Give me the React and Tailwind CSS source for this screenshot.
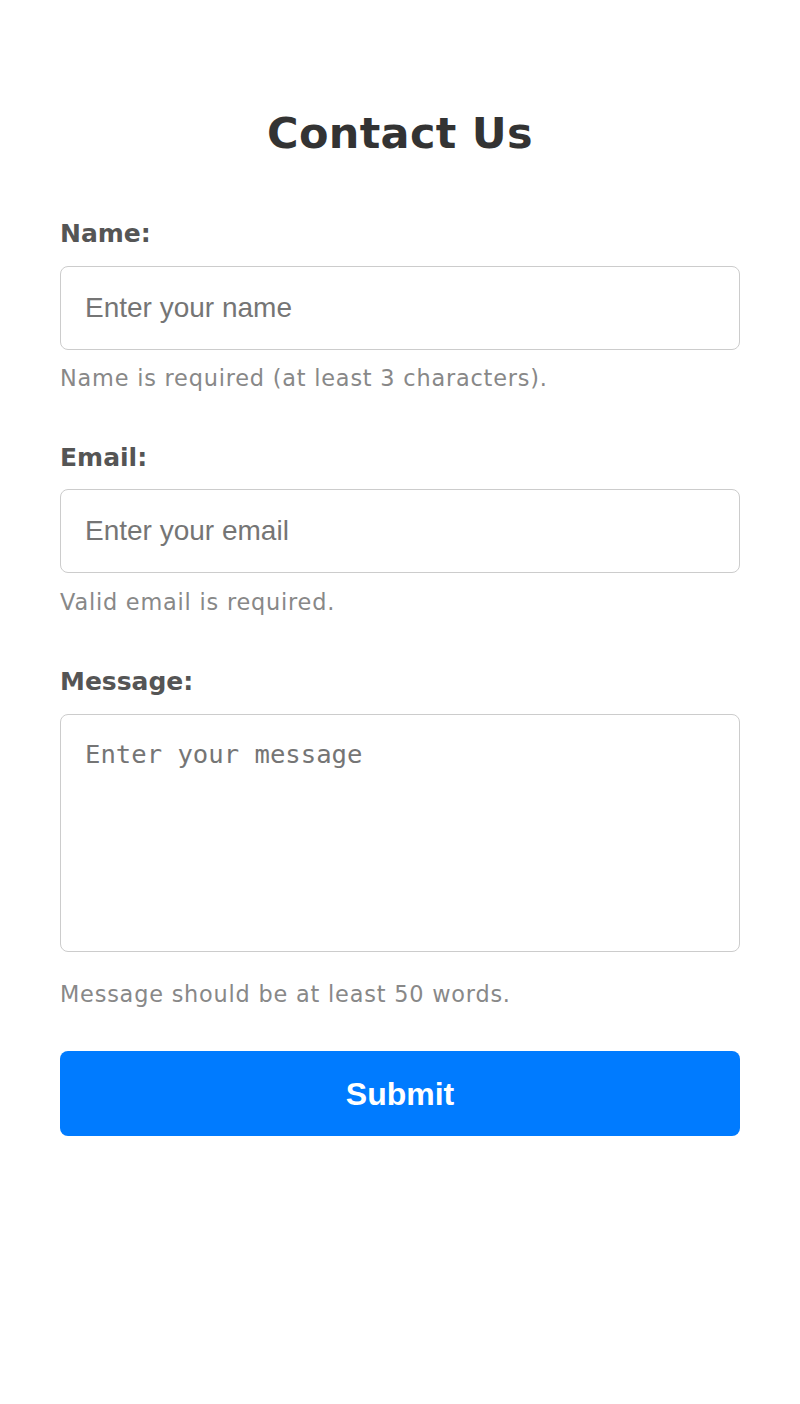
export default function App() {
  const label = "block font-['DejaVu_Sans',sans-serif] font-bold text-[25px] leading-[33px] text-[#555]";
  const help = "block font-['DejaVu_Sans',sans-serif] text-[22.4px] leading-[32px] tracking-[0.8px] text-[#888]";
  const field =
    "block w-full h-[84px] px-[24px] rounded-[8px] border border-[#ccc] bg-white font-['Liberation_Sans',Arial,sans-serif] text-[28px] text-[#333] placeholder:text-[#757575] outline-none";

  return (
    <div className="min-h-[1404px] bg-white">
      <div className="w-[680px] mx-auto pt-[104px]">
        <h1 className="text-center font-['DejaVu_Sans',sans-serif] font-bold text-[43px] leading-[58px] tracking-[0.3px] text-[#333]">
          Contact Us
        </h1>

        <form className="mt-[55px]" onSubmit={(e) => e.preventDefault()}>
          <label htmlFor="name" className={label}>Name:</label>
          <input id="name" type="text" placeholder="Enter your name" className={`${field} mt-[16px]`} />
          <span className={`${help} mt-[12px]`}>Name is required (at least 3 characters).</span>

          <label htmlFor="email" className={`${label} mt-[47px]`}>Email:</label>
          <input id="email" type="email" placeholder="Enter your email" className={`${field} mt-[15px]`} />
          <span className={`${help} mt-[13px]`}>Valid email is required.</span>

          <label htmlFor="message" className={`${label} mt-[47px]`}>Message:</label>
          <textarea
            id="message"
            placeholder="Enter your message"
            className="block w-full h-[238px] mt-[16px] px-[24px] py-[24px] rounded-[8px] border border-[#ccc] bg-white font-['DejaVu_Sans_Mono',monospace] text-[25.6px] leading-[30px] text-[#333] placeholder:text-[#757575] outline-none resize-none"
          />
          <span className={`${help} mt-[26px]`}>Message should be at least 50 words.</span>

          <button
            type="submit"
            className="block w-full h-[85px] mt-[41px] rounded-[8px] bg-[#007bff] text-white font-['Liberation_Sans',Arial,sans-serif] font-bold text-[32px]"
          >
            Submit
          </button>
        </form>
      </div>
    </div>
  );
}
